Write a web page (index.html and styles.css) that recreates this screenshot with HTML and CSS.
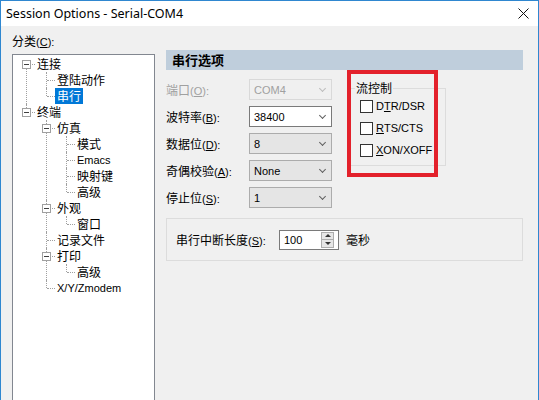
FILE: index.html
```html
<!DOCTYPE html>
<html lang="zh-CN">
<head>
    <meta charset="UTF-8">
    <meta name="viewport" content="width=device-width, initial-scale=1.0">
    <title>Session Options - Serial-COM4</title>
    <link rel="stylesheet" href="styles.css">
</head>
<body>

    <div class="window">
        <div class="titlebar">
            <span class="title">Session Options - Serial-COM4</span>
            <svg class="close" width="11" height="11" viewBox="0 0 11 11">
                <path d="M0.5 0.5 L10.5 10.5 M10.5 0.5 L0.5 10.5" stroke="#111" stroke-width="1" fill="none"/>
            </svg>
        </div>

        <div class="content">
            <div class="side">
                <div class="side-label">分类<span class="key">(<u>C</u>):</span></div>
                <ul class="tree">
                    <li>
                        <i class="toggle"></i><span class="node">连接</span>
                        <ul>
                            <li><span class="node">登陆动作</span></li>
                            <li><span class="node selected">串行</span></li>
                        </ul>
                    </li>
                    <li>
                        <i class="toggle"></i><span class="node">终端</span>
                        <ul>
                            <li>
                                <i class="toggle"></i><span class="node">仿真</span>
                                <ul>
                                    <li><span class="node">模式</span></li>
                                    <li><span class="node latin">Emacs</span></li>
                                    <li><span class="node">映射键</span></li>
                                    <li><span class="node">高级</span></li>
                                </ul>
                            </li>
                            <li>
                                <i class="toggle"></i><span class="node">外观</span>
                                <ul>
                                    <li><span class="node">窗口</span></li>
                                </ul>
                            </li>
                            <li><span class="node">记录文件</span></li>
                            <li>
                                <i class="toggle"></i><span class="node">打印</span>
                                <ul>
                                    <li><span class="node">高级</span></li>
                                </ul>
                            </li>
                            <li><span class="node latin">X/Y/Zmodem</span></li>
                        </ul>
                    </li>
                </ul>
            </div>

            <div class="main">
                <div class="section-head">串行选项</div>

                <div class="serial">
                    <div class="fields">
                        <div class="field disabled">
                            <label>端口<span class="key">(<u>O</u>):</span></label>
                            <div class="combo">COM4<i class="arrow"></i></div>
                        </div>
                        <div class="field">
                            <label>波特率<span class="key">(<u>B</u>):</span></label>
                            <div class="combo edit">38400<i class="arrow"></i></div>
                        </div>
                        <div class="field">
                            <label>数据位<span class="key">(<u>D</u>):</span></label>
                            <div class="combo list">8<i class="arrow"></i></div>
                        </div>
                        <div class="field">
                            <label>奇偶校验<span class="key">(<u>A</u>):</span></label>
                            <div class="combo list">None<i class="arrow"></i></div>
                        </div>
                        <div class="field">
                            <label>停止位<span class="key">(<u>S</u>):</span></label>
                            <div class="combo list">1<i class="arrow"></i></div>
                        </div>
                    </div>

                    <fieldset class="flow">
                        <legend>流控制</legend>
                        <div class="check"><span class="box"></span>D<u>T</u>R/DSR</div>
                        <div class="check"><span class="box"></span><u>R</u>TS/CTS</div>
                        <div class="check"><span class="box"></span><u>X</u>ON/XOFF</div>
                    </fieldset>

                    <!-- highlight frame drawn over the flow control group -->
                    <div class="mark"></div>
                </div>

                <div class="break-group">
                    <label class="break-label">串行中断长度<span class="key">(<u>S</u>):</span></label>
                    <div class="spin">
                        <span>100</span>
                        <div class="spin-buttons">
                            <span class="up"></span>
                            <span class="down"></span>
                        </div>
                    </div>
                    <span class="unit">毫秒</span>
                </div>
            </div>
        </div>
    </div>

</body>
</html>
```

FILE: styles.css
```css
* {
    box-sizing: border-box;
}

html, body {
    margin: 0;
    padding: 0;
    overflow: hidden;
}

body {
    font-family: "Noto Sans CJK SC", "Noto Sans", sans-serif;
    font-size: 12px;
    color: #000;
}

/* latin runs are set narrower than the CJK face */
.key,
.latin,
.combo,
.check,
.spin {
    font-family: "Liberation Sans", Arial, sans-serif;
    font-size: 11px;
}

.window {
    width: 539px;
    height: 400px;
    background: #f0f0f0;
    border: 1px solid #2f87d0;
    border-bottom: none;
    overflow: hidden;
}

/* title bar */
.titlebar {
    height: 25px;
    background: #fff;
    display: flex;
    align-items: center;
    justify-content: space-between;
    padding: 0 9px 0 5px;
}

.title {
    font-family: "Noto Sans", sans-serif;
    font-size: 12.5px;
    color: #000;
}

.close {
    display: block;
}

/* body */
.content {
    display: flex;
    gap: 11px;
    padding: 6px 15px 0 11px;
}

.side {
    width: 143px;
    flex: none;
}

.side-label {
    height: 18px;
    line-height: 18px;
    margin-bottom: 4px;
}

/* category tree */
.tree {
    list-style: none;
    margin: 0;
    padding: 1px 0 0 0;
    height: 360px;
    background: #fff;
    border: 1px solid #828790;
}

.tree ul {
    list-style: none;
    margin: 0;
    padding: 0 0 0 20px;
}

.tree li {
    position: relative;
    padding-left: 22px;
    line-height: 16px;
}

.tree li::before {
    content: "";
    position: absolute;
    left: 13px;
    top: 0;
    bottom: 0;
    border-left: 1px dotted #a0a0a0;
}

.tree > li:first-child::before {
    top: 8px;
}

.tree li:last-child::before {
    bottom: auto;
    height: 8px;
}

.tree li::after {
    content: "";
    position: absolute;
    left: 14px;
    top: 8px;
    width: 8px;
    border-top: 1px dotted #a0a0a0;
}

.tree li ul {
    margin-left: -22px;
}

.toggle {
    position: absolute;
    left: 9px;
    top: 4px;
    width: 9px;
    height: 9px;
    border: 1px solid #a0a0a0;
    background: #fff;
    z-index: 1;
}

.toggle::after {
    content: "";
    position: absolute;
    left: 1px;
    top: 3px;
    width: 5px;
    border-top: 1px solid #404040;
}

.node {
    display: inline-block;
    height: 16px;
    padding: 0 2px;
    white-space: nowrap;
    vertical-align: top;
}

.node.selected {
    background: #0078d7;
    color: #fff;
}

/* options panel */
.main {
    flex: 1;
    padding-top: 18px;
}

.section-head {
    height: 20px;
    line-height: 20px;
    padding-left: 6px;
    background: #bfcedc;
    font-size: 13px;
    font-weight: bold;
}

.serial {
    position: relative;
    display: flex;
    margin-top: 6px;
}

.fields {
    width: 166px;
}

.field {
    display: flex;
    align-items: center;
    height: 27px;
}

.field label {
    width: 83px;
}

.combo {
    width: 83px;
    height: 21px;
    display: flex;
    align-items: center;
    justify-content: space-between;
    padding: 0 6px 0 4px;
    border: 1px solid #acacac;
}

.combo.edit {
    background: #fff;
    border-color: #7a7a7a;
}

.combo.list {
    background: #e5e5e5;
}

.arrow {
    width: 5px;
    height: 5px;
    margin-top: -3px;
    border-right: 1px solid #606060;
    border-bottom: 1px solid #606060;
    transform: rotate(45deg);
}

.field.disabled {
    color: #a0a0a0;
}

.field.disabled .combo {
    background: #f0f0f0;
    border-color: #d9d9d9;
}

.field.disabled .arrow {
    border-color: #bcbcbc;
}

/* flow control group */
.flow {
    width: 96px;
    margin: 5px 0 0 18px;
    padding: 0 0 4px 4px;
    border: 1px solid #dcdcdc;
    align-self: flex-start;
    min-width: 0;
}

.flow legend {
    padding: 0 1px;
    line-height: 14px;
}

.check {
    display: flex;
    align-items: center;
    height: 22px;
    padding-left: 5px;
}

.check .box {
    width: 13px;
    height: 13px;
    margin-right: 3px;
    border: 1px solid #333;
    background: #fff;
}

.mark {
    position: absolute;
    left: 181px;
    top: -6px;
    width: 91px;
    height: 107px;
    border: 4px solid #e3212b;
}

/* break length group */
.break-group {
    display: flex;
    align-items: center;
    height: 43px;
    margin-top: 7px;
    padding-left: 9px;
    border: 1px solid #dcdcdc;
}

.break-label {
    width: 103px;
}

.spin {
    width: 60px;
    height: 20px;
    display: flex;
    align-items: center;
    justify-content: space-between;
    padding: 0 4px 0 4px;
    background: #fff;
    border: 1px solid #7a7a7a;
}

.spin-buttons {
    display: flex;
    flex-direction: column;
    width: 13px;
    height: 16px;
    border: 1px solid #adadad;
}

.spin-buttons span {
    flex: 1;
    background: #e6e6e6;
    display: flex;
    align-items: center;
    justify-content: center;
}

.spin-buttons .up {
    border-bottom: 1px solid #adadad;
}

.spin-buttons .up::after {
    content: "";
    border-left: 3px solid transparent;
    border-right: 3px solid transparent;
    border-bottom: 3px solid #333;
}

.spin-buttons .down::after {
    content: "";
    border-left: 3px solid transparent;
    border-right: 3px solid transparent;
    border-top: 3px solid #333;
}

.unit {
    margin-left: 7px;
}
```
